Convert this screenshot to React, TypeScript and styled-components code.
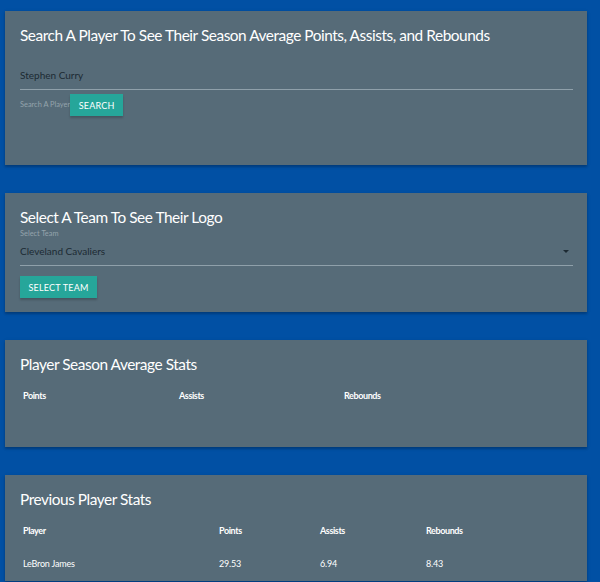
import React from "react";
import styled, { createGlobalStyle } from "styled-components";

const Global = createGlobalStyle`
  html, body { margin: 0; padding: 0; background: #0150a4; }
  body { font-family: Lato, "Open Sans", sans-serif; overflow: hidden; }
`;

const Page = styled.div`
  width: 600px;
  height: 582px;
  background: #0150a4;
  padding: 11px 13px 0 5px;
  box-sizing: border-box;
  display: flex;
  flex-direction: column;
  gap: 28px;
  overflow: hidden;
`;

const Card = styled.section<{ $h: number }>`
  background: #566b78;
  height: ${(p) => p.$h}px;
  flex-shrink: 0;
  box-sizing: border-box;
  padding: 14px 14px 0 15px;
  box-shadow: 0 2px 2px rgba(0, 0, 0, 0.18), 0 1px 4px rgba(0, 0, 0, 0.12);
  color: #fff;
`;

const Title = styled.h2`
  margin: 0;
  font-weight: 400;
  font-size: 15.4px;
  letter-spacing: -0.45px;
  line-height: 20px;
  color: #fff;
`;

const Field = styled.div<{ $mt: number }>`
  margin-top: ${(p) => p.$mt}px;
  border-bottom: 1px solid #8fa0aa;
  display: flex;
  align-items: center;
  justify-content: space-between;
  padding-bottom: 7px;
`;

const Value = styled.span`
  font-size: 10px;
  color: #1c2a33;
  line-height: 13px;
`;

const Label = styled.div<{ $mt?: number }>`
  font-size: 7.4px;
  color: #94a3ac;
  line-height: 8px;
  margin-top: ${(p) => p.$mt ?? 0}px;
`;

const Arrow = styled.span`
  width: 0;
  height: 0;
  border-left: 3px solid transparent;
  border-right: 3px solid transparent;
  border-top: 3px solid #1c2a33;
  margin-right: 4px;
`;

const Row = styled.div<{ $mt: number }>`
  display: flex;
  align-items: center;
  margin-top: ${(p) => p.$mt}px;
`;

const Button = styled.button<{ $w: number }>`
  background: #26a69a;
  color: #fff;
  border: none;
  width: ${(p) => p.$w}px;
  height: 22px;
  font-family: inherit;
  font-size: 9px;
  letter-spacing: 0.2px;
  text-transform: uppercase;
  padding: 0;
  box-shadow: 0 2px 2px rgba(0, 0, 0, 0.2);
`;

const Grid = styled.div<{ $cols: string; $mt: number }>`
  display: grid;
  grid-template-columns: ${(p) => p.$cols};
  margin-top: ${(p) => p.$mt}px;
  padding-left: 3px;
  row-gap: 21px;
`;

const Head = styled.div`
  font-size: 9px;
  font-weight: 700;
  letter-spacing: -0.4px;
  line-height: 12px;
  color: #fff;
`;

const Cell = styled.div`
  font-size: 9px;
  letter-spacing: -0.2px;
  line-height: 12px;
  color: #fff;
`;

export default function App() {
  return (
    <>
      <Global />
      <Page>
        <Card $h={154}>
          <Title>Search A Player To See Their Season Average Points, Assists, and Rebounds</Title>
          <Field $mt={24}>
            <Value>Stephen Curry</Value>
          </Field>
          <Row $mt={4}>
            <Label>Search A Player</Label>
            <Button $w={53}>Search</Button>
          </Row>
        </Card>
        <Card $h={119}>
          <Title>Select A Team To See Their Logo</Title>
          <Label $mt={3}>Select Team</Label>
          <Field $mt={7}>
            <Value>Cleveland Cavaliers</Value>
            <Arrow />
          </Field>
          <Row $mt={10}>
            <Button $w={77}>Select Team</Button>
          </Row>
        </Card>
        <Card $h={107}>
          <Title>Player Season Average Stats</Title>
          <Grid $cols="156px 165px 1fr" $mt={16}>
            <Head>Points</Head>
            <Head>Assists</Head>
            <Head>Rebounds</Head>
          </Grid>
        </Card>
        <Card $h={106}>
          <Title>Previous Player Stats</Title>
          <Grid $cols="196px 101px 106px 1fr" $mt={16}>
            <Head>Player</Head>
            <Head>Points</Head>
            <Head>Assists</Head>
            <Head>Rebounds</Head>
            <Cell>LeBron James</Cell>
            <Cell>29.53</Cell>
            <Cell>6.94</Cell>
            <Cell>8.43</Cell>
          </Grid>
        </Card>
      </Page>
    </>
  );
}
